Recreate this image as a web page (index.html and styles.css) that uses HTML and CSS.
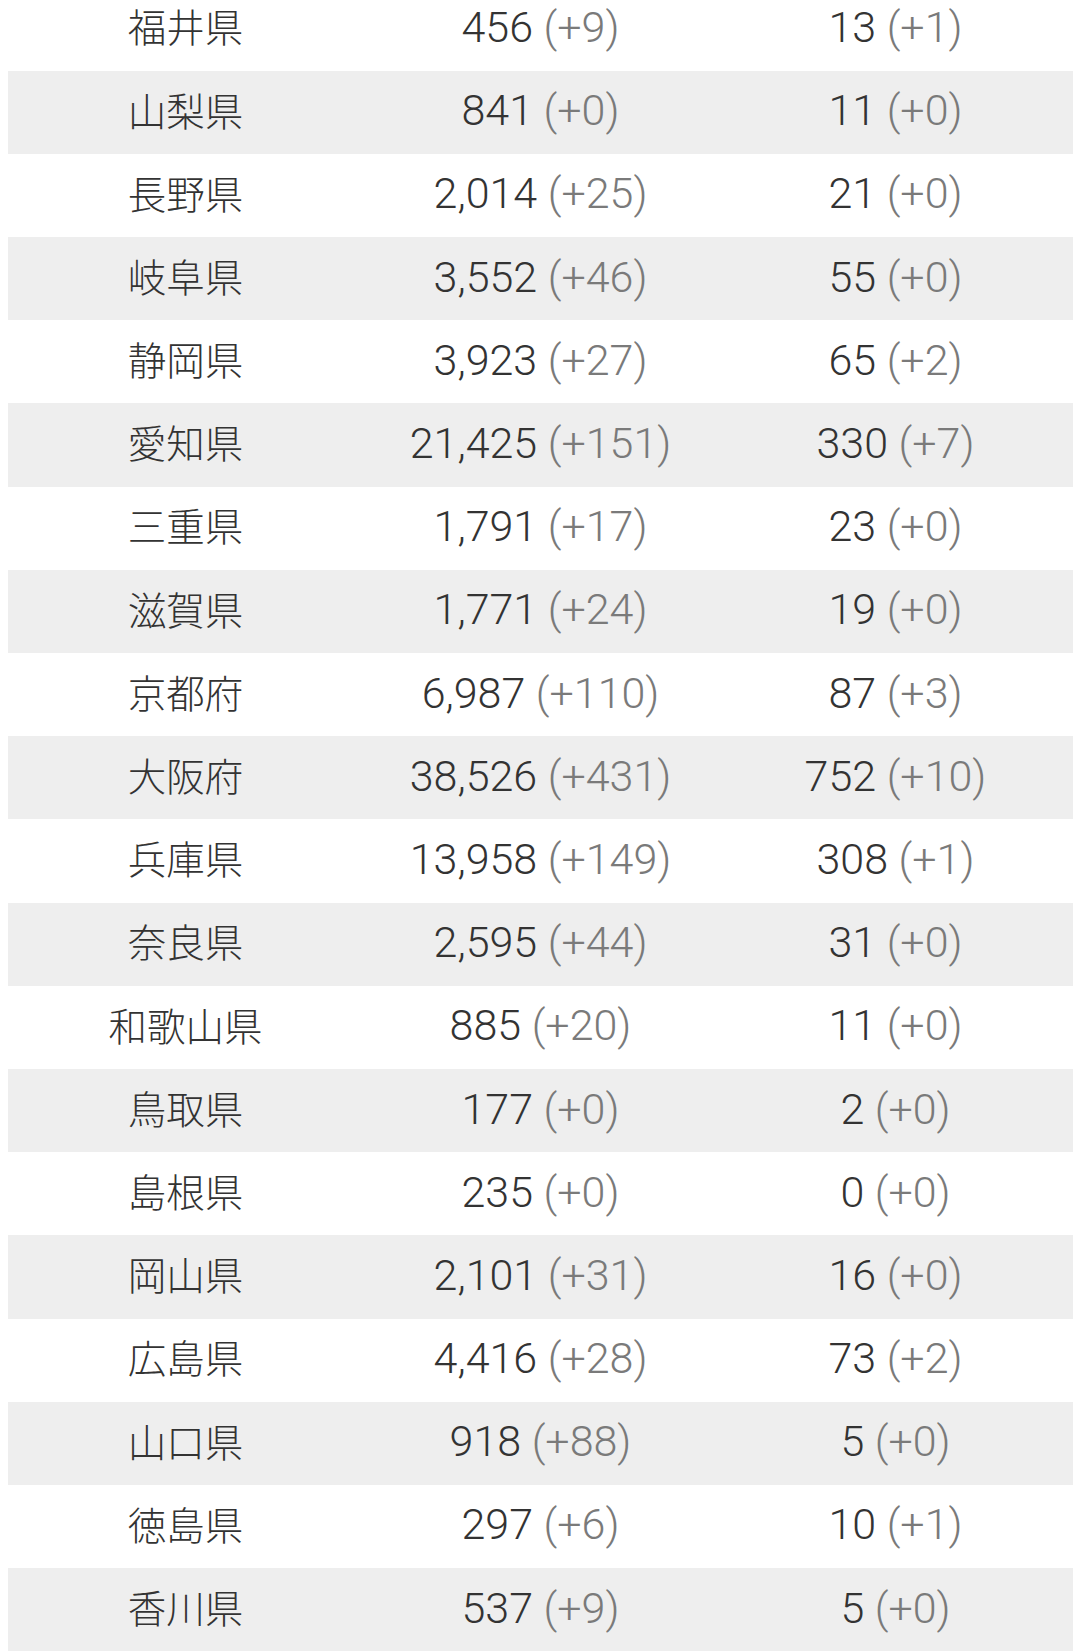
FILE: index.html
```html
<!DOCTYPE html>
<html lang="ja">
<head>
<meta charset="utf-8">
<link rel="stylesheet" href="styles.css">
</head>
<body>
<div class="table">
  <div class="row"><div class="cell name">福井県</div><div class="cell num">456 <span class="d">(+9)</span></div><div class="cell num">13 <span class="d">(+1)</span></div></div>
  <div class="row"><div class="cell name">山梨県</div><div class="cell num">841 <span class="d">(+0)</span></div><div class="cell num">11 <span class="d">(+0)</span></div></div>
  <div class="row"><div class="cell name">長野県</div><div class="cell num">2,014 <span class="d">(+25)</span></div><div class="cell num">21 <span class="d">(+0)</span></div></div>
  <div class="row"><div class="cell name">岐阜県</div><div class="cell num">3,552 <span class="d">(+46)</span></div><div class="cell num">55 <span class="d">(+0)</span></div></div>
  <div class="row"><div class="cell name">静岡県</div><div class="cell num">3,923 <span class="d">(+27)</span></div><div class="cell num">65 <span class="d">(+2)</span></div></div>
  <div class="row"><div class="cell name">愛知県</div><div class="cell num">21,425 <span class="d">(+151)</span></div><div class="cell num">330 <span class="d">(+7)</span></div></div>
  <div class="row"><div class="cell name">三重県</div><div class="cell num">1,791 <span class="d">(+17)</span></div><div class="cell num">23 <span class="d">(+0)</span></div></div>
  <div class="row"><div class="cell name">滋賀県</div><div class="cell num">1,771 <span class="d">(+24)</span></div><div class="cell num">19 <span class="d">(+0)</span></div></div>
  <div class="row"><div class="cell name">京都府</div><div class="cell num">6,987 <span class="d">(+110)</span></div><div class="cell num">87 <span class="d">(+3)</span></div></div>
  <div class="row"><div class="cell name">大阪府</div><div class="cell num">38,526 <span class="d">(+431)</span></div><div class="cell num">752 <span class="d">(+10)</span></div></div>
  <div class="row"><div class="cell name">兵庫県</div><div class="cell num">13,958 <span class="d">(+149)</span></div><div class="cell num">308 <span class="d">(+1)</span></div></div>
  <div class="row"><div class="cell name">奈良県</div><div class="cell num">2,595 <span class="d">(+44)</span></div><div class="cell num">31 <span class="d">(+0)</span></div></div>
  <div class="row"><div class="cell name">和歌山県</div><div class="cell num">885 <span class="d">(+20)</span></div><div class="cell num">11 <span class="d">(+0)</span></div></div>
  <div class="row"><div class="cell name">鳥取県</div><div class="cell num">177 <span class="d">(+0)</span></div><div class="cell num">2 <span class="d">(+0)</span></div></div>
  <div class="row"><div class="cell name">島根県</div><div class="cell num">235 <span class="d">(+0)</span></div><div class="cell num">0 <span class="d">(+0)</span></div></div>
  <div class="row"><div class="cell name">岡山県</div><div class="cell num">2,101 <span class="d">(+31)</span></div><div class="cell num">16 <span class="d">(+0)</span></div></div>
  <div class="row"><div class="cell name">広島県</div><div class="cell num">4,416 <span class="d">(+28)</span></div><div class="cell num">73 <span class="d">(+2)</span></div></div>
  <div class="row"><div class="cell name">山口県</div><div class="cell num">918 <span class="d">(+88)</span></div><div class="cell num">5 <span class="d">(+0)</span></div></div>
  <div class="row"><div class="cell name">徳島県</div><div class="cell num">297 <span class="d">(+6)</span></div><div class="cell num">10 <span class="d">(+1)</span></div></div>
  <div class="row"><div class="cell name">香川県</div><div class="cell num">537 <span class="d">(+9)</span></div><div class="cell num">5 <span class="d">(+0)</span></div></div>
</div>
</body>
</html>
```

FILE: styles.css
```css
html, body {
  background: #ffffff;
  overflow: hidden;
}
body {
  margin: 0 7px 0 8px;
  font-family: "Noto Sans CJK JP", "Noto Sans", sans-serif;
  color: #333333;
}
.table {
  display: flex;
  flex-direction: column;
}
.row {
  display: grid;
  grid-template-columns: 1fr 1fr 1fr;
  height: 83.2px;
  align-items: center;
  box-sizing: border-box;
}
.row:first-child {
  height: 70.7px;
  padding-bottom: 12.5px;
}
.row:nth-child(even) {
  background: #eeeeee;
}
.cell {
  text-align: center;
  line-height: 1;
  white-space: nowrap;
}
.name {
  font-family: "Noto Sans CJK JP", sans-serif;
  font-size: 38.5px;
  font-weight: 300;
  padding-bottom: 7px;
}
.num {
  font-family: Roboto, "Noto Sans", sans-serif;
  font-size: 43px;
  font-weight: 300;
  padding-bottom: 3px;
}
.d {
  color: #7a7a7a;
}
```
